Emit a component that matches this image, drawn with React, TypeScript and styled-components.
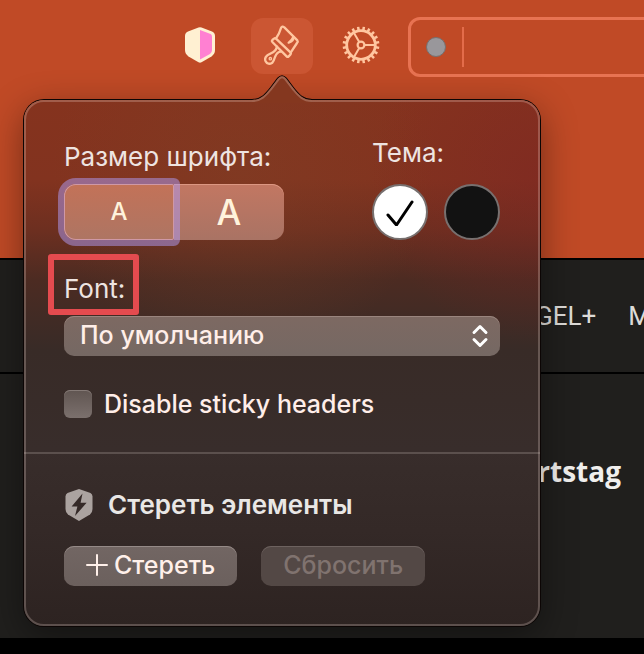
import React from "react";
import styled, { createGlobalStyle } from "styled-components";

const GlobalStyle = createGlobalStyle`
  *, *::before, *::after { box-sizing: border-box; }
  html, body, #root { height: 100%; }
  body {
    margin: 0;
    background: #000;
    overflow: hidden;
    font-family: "Inter", "Liberation Sans", sans-serif;
  }
  button, select, input { font: inherit; margin: 0; }
`;

const Page = styled.div`
  position: relative;
  display: flex;
  flex-direction: column;
  min-height: 100%;
  overflow: hidden;
`;

const Toolbar = styled.header`
  display: flex;
  align-items: flex-start;
  gap: 16px;
  height: 258px;
  padding: 17px 0 0 165px;
  background: #c04a26;
`;

const ToolButton = styled.button<{ $active?: boolean; $width: number }>`
  display: grid;
  place-items: center;
  flex: none;
  width: ${(p) => p.$width}px;
  height: 56px;
  margin-top: 1px;
  padding: 0 0 3px;
  border: 0;
  border-radius: 12px;
  background: ${(p) => (p.$active ? "#cb5633" : "transparent")};
  color: #ffc6a0;
`;

const AddressBar = styled.div`
  display: flex;
  align-items: center;
  flex: 1;
  gap: 16px;
  height: 60px;
  margin-right: -20px;
  padding-left: 15px;
  border: 3px solid #e87352;
  border-radius: 12px;
`;

const StatusDot = styled.span`
  width: 20px;
  height: 20px;
  border: 1px solid #75706f;
  border-radius: 50%;
  background: #99979b;
`;

const Caret = styled.span`
  width: 2px;
  height: 40px;
  background: #e36c4a;
`;

const SiteNav = styled.nav`
  display: flex;
  align-items: center;
  gap: 32px;
  height: 116px;
  padding-left: 535px;
  border: solid #000;
  border-width: 2px 0;
  background: #201f1d;
  white-space: nowrap;
`;

const SiteLink = styled.a`
  color: #dddbd8;
  font: 400 26px/32px Roboto, sans-serif;
  text-decoration: none;
`;

const Article = styled.main`
  display: flex;
  flex: 1;
  justify-content: flex-end;
  margin-bottom: 16px;
  padding: 77px 23px 0;
  background: #201f1d;
`;

const ArticleTitle = styled.h2`
  margin: 0;
  color: #f0efed;
  font: 700 28px/40px "Open Sans", sans-serif;
`;

const Popover = styled.section`
  position: absolute;
  top: 100px;
  left: 24px;
  width: 516px;
  border-radius: 20px;
  color: #eee4e1;
  font-size: 25px;
  font-weight: 500;
  line-height: 32px;
  background:
    radial-gradient(circle at 100% 14%, rgba(126, 34, 36, 0.45), transparent 170px),
    radial-gradient(circle at 42% 14%, rgba(126, 66, 38, 0.4), transparent 190px),
    linear-gradient(#85331e 0, #82331f 80px, #6d2f20 130px, #4c2b22 180px, #382b27 250px, #382d2b 350px, #342927 430px, #2d2321 526px);
  box-shadow: 0 0 0 1px #0c0504, 0 10px 36px rgba(0, 0, 0, 0.42);

  &::after {
    content: "";
    position: absolute;
    inset: 0;
    border: 2px solid rgba(255, 235, 225, 0.23);
    border-radius: inherit;
    pointer-events: none;
  }
`;

const Arrow = styled.svg`
  position: absolute;
  z-index: 1;
  top: -28px;
  left: 226px;
`;

const Panel = styled.div<{ $top: number; $bottom: number }>`
  display: flex;
  flex-direction: column;
  align-items: flex-start;
  padding: ${(p) => p.$top}px 40px ${(p) => p.$bottom}px;
`;

const TopRow = styled.div`
  display: flex;
  justify-content: space-between;
  align-items: flex-end;
  width: 100%;
`;

const Group = styled.fieldset<{ $gap: number }>`
  display: flex;
  flex-direction: column;
  gap: ${(p) => p.$gap}px;
  margin: 0;
  padding: 0;
  border: 0;
`;

const GroupLabel = styled.span`
  font-size: 26px;
  font-weight: 400;
  white-space: nowrap;
`;

const Segments = styled.div`
  display: flex;
  width: 220px;
  height: 56px;
`;

const Segment = styled.button<{ $focused?: boolean; $size: number }>`
  position: relative;
  flex: 1;
  z-index: ${(p) => (p.$focused ? 1 : 0)};
  padding: 0;
  border: 0;
  border-radius: ${(p) => (p.$focused ? "12px 2px 2px 12px" : "0 12px 12px 0")};
  background: ${(p) =>
    p.$focused ? "linear-gradient(#c37258, #ad7563)" : "linear-gradient(#c27762, #a97364)"};
  box-shadow: ${(p) =>
    p.$focused
      ? "0 0 0 6px rgba(174, 154, 242, 0.52), inset 0 0 0 1px #cf98a6"
      : "inset 0 1px 0 #dc9782"};
  color: #fff3dc;
  font-size: ${(p) => p.$size}px;
  font-weight: 500;
  line-height: 56px;
`;

const Swatches = styled.div`
  display: flex;
  gap: 16px;
`;

const Swatch = styled.label`
  display: grid;

  > * { grid-area: 1 / 1; place-self: center; }
`;

const SwatchInput = styled.input<{ $color: string }>`
  appearance: none;
  width: 56px;
  height: 56px;
  border: 2px solid #77706f;
  border-radius: 50%;
  background: ${(p) => p.$color};
`;

const FontLabel = styled.label`
  position: relative;
  margin-top: 33px;
  margin-bottom: 11px;
  font-size: 26px;
  font-weight: 400;

  &::after {
    content: "";
    position: absolute;
    inset: -19px -14px -10px -16px;
    border: 6px solid #e54b4f;
    border-radius: 3px;
  }
`;

const SelectBox = styled.div`
  display: grid;
  width: 100%;
  color: #fff;

  > * { grid-area: 1 / 1; }
  > svg { place-self: center end; margin-right: 11px; pointer-events: none; }
`;

const Select = styled.select`
  appearance: none;
  width: 100%;
  height: 40px;
  padding: 0 48px 2px 16px;
  border: 0;
  border-radius: 10px;
  background: linear-gradient(#7d6962, #756863);
  box-shadow: inset 0 1px 0 #9a857e;
  color: #ffeee8;
`;

const CheckRow = styled.label`
  display: flex;
  align-items: center;
  gap: 12px;
  margin-top: 32px;
  color: #ffeee9;
  white-space: nowrap;
`;

const Checkbox = styled.input`
  appearance: none;
  width: 28px;
  height: 28px;
  border-radius: 6px;
  background: linear-gradient(#605551, #7b706d);
  box-shadow: inset 0 1px 0 #857a76;
`;

const Divider = styled.hr`
  height: 2px;
  margin: 0;
  border: 0;
  background: #5b504d;
`;

const EraseHeading = styled.h3`
  display: flex;
  align-items: center;
  gap: 14px;
  margin: 0 0 25px;
  color: #e9e7e5;
  font-size: 26px;
  font-weight: 600;
  line-height: 32px;
`;

const Buttons = styled.div`
  display: flex;
  gap: 24px;
`;

const PushButton = styled.button`
  display: flex;
  align-items: center;
  justify-content: center;
  gap: 6px;
  height: 40px;
  padding: 0 22px 2px;
  border: 0;
  border-radius: 10px;
  background: linear-gradient(#726663, #6b605d);
  box-shadow: inset 0 1px 0 #958a87;
  color: #fff0ea;

  &:disabled {
    background: #534845;
    box-shadow: inset 0 1px 0 #6d625f;
    color: #80736f;
  }
`;

const teeth = Array.from({ length: 20 }, (_, i) => i * 18 + 9);

const ShieldIcon = () => (
  <svg width="30" height="36" viewBox="0 0 30 36" aria-hidden="true">
    <path d="M13.5 0.5 Q15 0 16.5 0.5 L27 4.4 Q30 5.6 30 9 V23 Q30 27 26.5 29.4 L16.5 35.3 Q15 36 13.5 35.3 L3.5 29.4 Q0 27 0 23 V9 Q0 5.6 3 4.4 Z" fill="#fff0d2" />
    <path d="M15 3 L25.6 7 Q27 7.6 27 9.4 V23 Q27 25.6 25 27 L15 32.6 Z" fill="#ff80d2" />
  </svg>
);

const BrushIcon = () => (
  <svg width="36" height="40" viewBox="0 0 108 120" fill="none" stroke="currentColor" strokeWidth="7" strokeLinecap="round" strokeLinejoin="round" aria-hidden="true">
    <path d="M36 40 Q47 24 51 9 Q54 2 61 7 L100 46 Q103 50 99 54 L80 83" />
    <path d="M88 36 Q90 48 74 53 Q84 47 88 36 Z" fill="currentColor" />
    <path d="M36 41 L80 83 Q82 86 79 89 L74 94 Q71 97 68 94 L25 51 Q22 48 25 45 L30 41 Q33 38 36 41 Z" />
    <path d="M39 65 Q38 74 27 82 L10 91 Q0 99 5 109 Q12 121 25 113 Q29 109 33 96 Q40 79 51 80" />
    <circle cx="19" cy="101" r="2" />
  </svg>
);

const GearIcon = () => (
  <svg width="38" height="38" viewBox="-19 -19 38 38" fill="none" stroke="currentColor" strokeWidth="2" aria-hidden="true">
    <circle r="14.3" strokeWidth="2.8" />
    <circle r="3.4" strokeWidth="2.2" />
    {[0, 120, 240].map((a) => (
      <path key={a} d="M3.5 0 H14" transform={`rotate(${a})`} />
    ))}
    {teeth.map((a) => (
      <path key={a} d="M15 0 H18.4" strokeWidth="2.5" transform={`rotate(${a})`} />
    ))}
  </svg>
);

const BoltShieldIcon = () => (
  <svg width="30" height="32" viewBox="0 0 30 32" aria-hidden="true">
    <path d="M15 0 L26.5 4 Q28.5 5 28.5 7.5 V20 Q28.5 23.5 26 25.4 L15 32 L4 25.4 Q1.5 23.5 1.5 20 V7.5 Q1.5 5 3.5 4 Z" fill="#aba3a0" />
    <path d="M18.5 4.5 L7.6 17.4 H13.4 L11 27 L22.6 13.8 H16.6 Z" fill="#352a28" />
  </svg>
);

const edge = "M0 28 C9 28 13 23 18 17 L26 6.5 Q30 2 34 6.5 L42 17 C47 23 51 28 60 28";

export default function App() {
  return (
    <Page>
      <GlobalStyle />
      <Toolbar>
        <ToolButton $width={70} aria-label="Shield"><ShieldIcon /></ToolButton>
        <ToolButton $width={62} $active aria-label="Appearance"><BrushIcon /></ToolButton>
        <ToolButton $width={63} aria-label="Settings"><GearIcon /></ToolButton>
        <AddressBar>
          <StatusDot />
          <Caret />
        </AddressBar>
      </Toolbar>
      <SiteNav>
        <SiteLink href="#plus">GEL+</SiteLink>
        <SiteLink href="#m">M</SiteLink>
      </SiteNav>
      <Article>
        <ArticleTitle>rtstag</ArticleTitle>
      </Article>

      <Popover>
        <Arrow width="64" height="32" viewBox="-2 0 64 32" aria-hidden="true">
          <clipPath id="arrow-clip">
            <path d={`${edge} V31 H0 Z`} />
          </clipPath>
          <path d={edge} fill="none" stroke="#0c0504" strokeWidth="2" />
          <g clipPath="url(#arrow-clip)">
            <rect x="0" y="0" width="60" height="31" fill="#84371f" />
            <path d={edge} fill="none" stroke="#a1634f" strokeWidth="4" />
          </g>
        </Arrow>
        <Panel $top={37} $bottom={32}>
          <TopRow>
            <Group $gap={11} aria-label="Размер шрифта">
              <GroupLabel>Размер шрифта:</GroupLabel>
              <Segments>
                <Segment $size={24} $focused>A</Segment>
                <Segment $size={35}>A</Segment>
              </Segments>
            </Group>
            <Group $gap={15} aria-label="Тема">
              <GroupLabel>Тема:</GroupLabel>
              <Swatches>
                <Swatch>
                  <SwatchInput type="radio" name="theme" $color="#fff" defaultChecked aria-label="Light" />
                  <svg width="28" height="28" viewBox="0 0 28 28" fill="none" stroke="#000" strokeWidth="3" strokeLinecap="round" strokeLinejoin="round" aria-hidden="true">
                    <path d="M2 17 L10.5 27 L26 4" />
                  </svg>
                </Swatch>
                <Swatch>
                  <SwatchInput type="radio" name="theme" $color="#121212" aria-label="Dark" />
                </Swatch>
              </Swatches>
            </Group>
          </TopRow>
          <FontLabel htmlFor="font">Font:</FontLabel>
          <SelectBox>
            <Select id="font" defaultValue="default">
              <option value="default">По умолчанию</option>
            </Select>
            <svg width="18" height="24" viewBox="0 0 18 24" fill="none" stroke="currentColor" strokeWidth="3" strokeLinecap="round" strokeLinejoin="round" aria-hidden="true">
              <path d="M3 8.5 L9 2.5 L15 8.5 M3 15.5 L9 21.5 L15 15.5" />
            </svg>
          </SelectBox>
          <CheckRow>
            <Checkbox type="checkbox" />
            Disable sticky headers
          </CheckRow>
        </Panel>
        <Divider />
        <Panel $top={35} $bottom={40}>
          <EraseHeading><BoltShieldIcon />Стереть элементы</EraseHeading>
          <Buttons>
            <PushButton>
              <svg width="22" height="22" viewBox="0 0 22 22" fill="none" stroke="currentColor" strokeWidth="2" strokeLinecap="round" aria-hidden="true">
                <path d="M1 11 H21 M11 1 V21" />
              </svg>
              Стереть
            </PushButton>
            <PushButton disabled>Сбросить</PushButton>
          </Buttons>
        </Panel>
      </Popover>
    </Page>
  );
}
